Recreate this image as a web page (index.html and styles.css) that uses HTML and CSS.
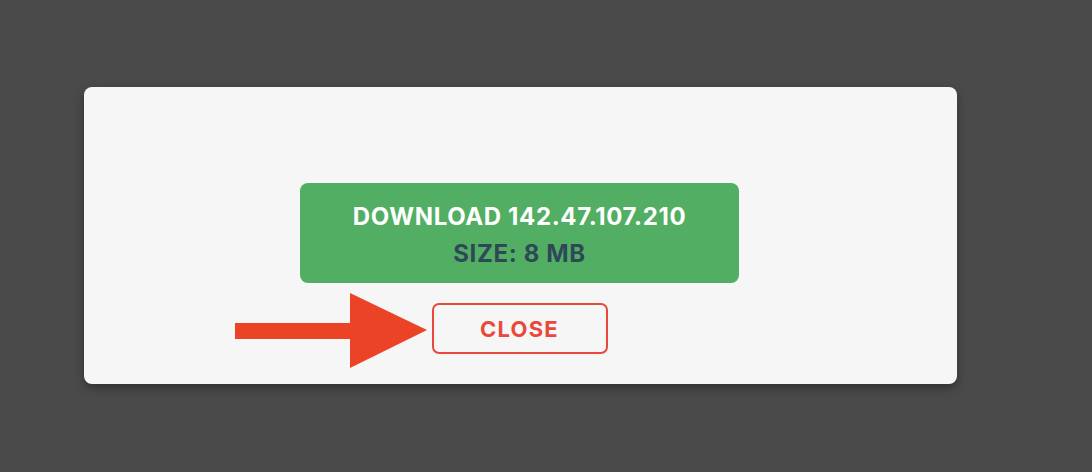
FILE: index.html
```html
<!DOCTYPE html>
<html>
<head>
<meta charset="utf-8">
<link rel="stylesheet" href="styles.css">
</head>
<body>
<div class="modal">
  <div class="download">
    <div class="dl-title">DOWNLOAD 142.47.107.210</div>
    <div class="dl-size">SIZE: 8 MB</div>
  </div>
  <div class="close-wrap">
    <svg class="arrow" width="195" height="76" viewBox="0 0 195 76">
      <rect x="0" y="30" width="118" height="16" fill="#ea4326"/>
      <polygon points="115,0 192,37 115,75" fill="#ea4326"/>
    </svg>
    <button class="close">CLOSE</button>
  </div>
</div>
</body>
</html>
```
FILE: styles.css
```css
html, body {
  margin: 0;
  padding: 0;
  background: #4a4a4a;
  height: 100%;
}
body {
  padding: 87px 0 0 84px;
  box-sizing: border-box;
  font-family: Inter, "Noto Sans", sans-serif;
}
.modal {
  width: 873px;
  height: 297px;
  box-sizing: border-box;
  background: #f6f6f6;
  border-radius: 8px;
  box-shadow: 0 4px 10px rgba(0,0,0,0.35);
  padding: 96px 2px 0 0;
  display: flex;
  flex-direction: column;
  align-items: center;
}
.download {
  width: 439px;
  height: 100px;
  background: #52ae62;
  border-radius: 8px;
  display: flex;
  flex-direction: column;
  align-items: center;
  justify-content: center;
  gap: 8px;
  font-weight: 700;
  font-size: 24px;
  line-height: 29px;
  letter-spacing: 0.62px;
}
.dl-title { color: #ffffff; margin-top: 3px; }
.dl-size { color: #2f4858; }
.close-wrap {
  margin-top: 20px;
  position: relative;
}
.close {
  width: 176px;
  height: 51px;
  background: transparent;
  border: 2px solid #e8493b;
  border-radius: 7px;
  color: #e8493b;
  font-family: Inter, "Noto Sans", sans-serif;
  font-weight: 700;
  font-size: 22px;
  letter-spacing: 1.2px;
  padding: 0;
  display: block;
}
.arrow {
  position: absolute;
  left: -197px;
  top: -10px;
}
```
